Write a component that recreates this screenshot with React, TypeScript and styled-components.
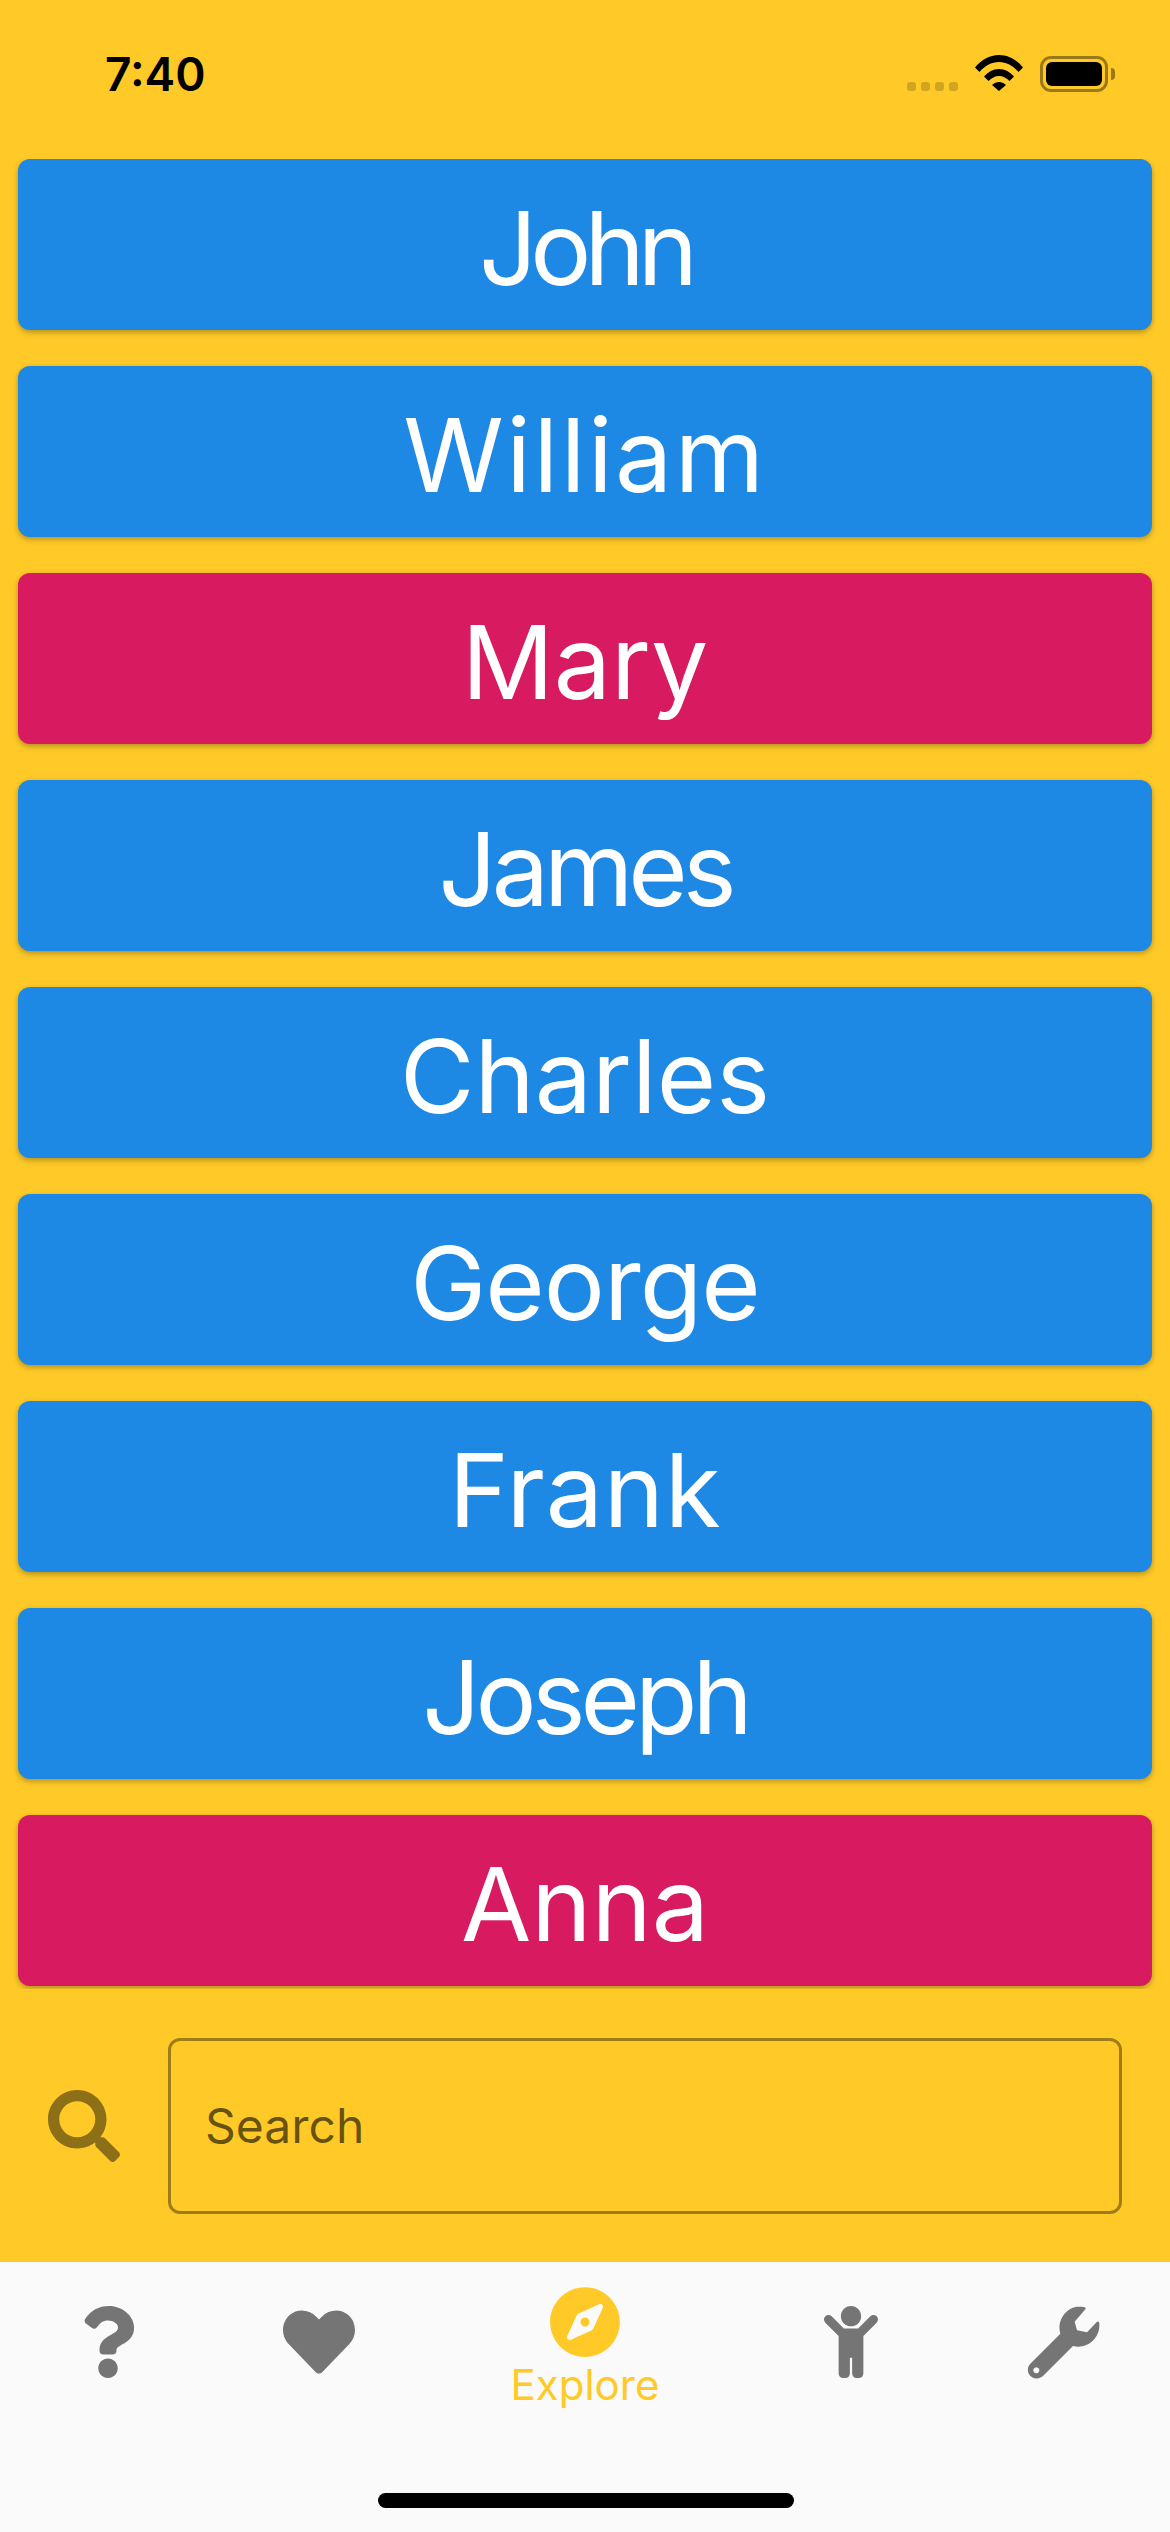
import React from 'react'
import styled, { createGlobalStyle } from 'styled-components'
import { FaSearch, FaQuestion, FaHeart, FaChild, FaCompass } from 'react-icons/fa'

const names: { label: string; pink?: boolean; tracking?: number }[] = [
  { label: 'John', tracking: -7 },
  { label: 'William', tracking: 2.5 },
  { label: 'Mary', pink: true },
  { label: 'James', tracking: -5 },
  { label: 'Charles' },
  { label: 'George', tracking: -1 },
  { label: 'Frank', tracking: 0.7 },
  { label: 'Joseph', tracking: -5 },
  { label: 'Anna', pink: true },
]

function WrenchIcon(): React.ReactElement {
  return (
    <WrenchSvg width="74" height="74" viewBox="112 45 222 222">
      <path
        fillRule="evenodd"
        fill="currentColor"
        d="M287 55L255 92L262 118L292 124L322 92Q330 88 329 105C328 145 290 175 250 165L160 255C145 268 125 262 117 248C112 235 115 225 122 218L212 128C200 90 230 45 270 47C280 47 292 48 287 55ZM140 229a9 9 0 1 0 .01 0Z"
      />
    </WrenchSvg>
  )
}

export default function App(): React.ReactElement {
  return (
    <>
      <GlobalStyle />
      <Page>
        <StatusBar>
          <Clock>7:40</Clock>
          <StatusIcons>
            <Dots>
              <Dot />
              <Dot />
              <Dot />
              <Dot />
            </Dots>
            <svg width="48" height="36" viewBox="0 0 48 36">
              <path d="M0 12.500C6 5 14.500 0 24 0s18 5 24 12.500l-4.500 4.500C38.500 11 31.500 7 24 7S9.500 11 4.500 17z" fill="#000" />
              <path d="M9 21.500C13 17 18 14 24 14s11 3 15 7.500l-4.500 4.500C31.500 23 28 21 24 21s-7.500 2-10.500 5z" fill="#000" />
              <path d="M17 30c2-2 4.500-3 7-3s5 1 7 3l-7 6z" fill="#000" />
            </svg>
            <Battery>
              <BatteryFill />
            </Battery>
          </StatusIcons>
        </StatusBar>
        <List>
          {names.map((n) => (
            <NameCard key={n.label} $pink={n.pink} $tracking={n.tracking ?? 0}>
              {n.label}
            </NameCard>
          ))}
        </List>
        <SearchRow>
          <SearchIcon>
            <FaSearch size={72} />
          </SearchIcon>
          <SearchField>Search</SearchField>
        </SearchRow>
        <TabBar>
          <Tab>
            <FaQuestion size={72} />
          </Tab>
          <Tab>
            <FaHeart size={72} />
          </Tab>
          <ActiveTab>
            <FaCompass size={72} />
            <TabLabel>Explore</TabLabel>
          </ActiveTab>
          <Tab>
            <FaChild size={72} />
          </Tab>
          <Tab>
            <WrenchIcon />
          </Tab>
          <HomeBar />
        </TabBar>
      </Page>
    </>
  )
}

const GlobalStyle = createGlobalStyle`
  html, body {
    margin: 0;
    padding: 0;
    background: #ffca28;
  }
  * {
    box-sizing: border-box;
  }
`

const Page = styled.div`
  display: flex;
  flex-direction: column;
  width: 1170px;
  height: 2532px;
  overflow: hidden;
  background-color: #ffca28;
  font-family: 'Inter', sans-serif;
`

const StatusBar = styled.div`
  display: flex;
  justify-content: space-between;
  align-items: flex-start;
  height: 159px;
  padding: 47px 62px 0 105px;
`

const Clock = styled.div`
  font-size: 46px;
  font-weight: 600;
  line-height: 55px;
  color: #000;
`

const StatusIcons = styled.div`
  display: flex;
  align-items: flex-start;
  padding-top: 8px;
`

const Dots = styled.div`
  display: flex;
  gap: 5px;
  margin: 27px 17px 0 0;
`

const Dot = styled.span`
  width: 9px;
  height: 9px;
  border-radius: 3px;
  background: rgba(0, 0, 0, 0.18);
`

const Battery = styled.div`
  position: relative;
  width: 68px;
  height: 36px;
  margin: 1px 0 0 17px;
  padding: 3px;
  border: 3px solid rgba(0, 0, 0, 0.4);
  border-radius: 11px;

  &::after {
    content: '';
    position: absolute;
    top: 9px;
    right: -10px;
    width: 4px;
    height: 12px;
    border-radius: 0 6px 6px 0;
    background: rgba(0, 0, 0, 0.4);
  }
`

const BatteryFill = styled.div`
  height: 100%;
  border-radius: 6px;
  background: #000;
`

const List = styled.div`
  display: flex;
  flex-direction: column;
  gap: 36px;
  height: 1830px;
  padding: 0 18px;
  overflow: hidden;
`

const NameCard = styled.div<{ $pink?: boolean; $tracking: number }>`
  display: flex;
  flex: none;
  align-items: center;
  justify-content: center;
  height: 171px;
  padding-top: 6px;
  border-radius: 12px;
  background-color: ${(p) => (p.$pink ? '#d81b60' : '#1e88e5')};
  box-shadow: 0 3px 6px rgba(0, 0, 0, 0.2), 0 1px 4px rgba(0, 0, 0, 0.12);
  font-size: 102px;
  letter-spacing: ${(p) => p.$tracking}px;
  color: #fff;
`

const SearchRow = styled.div`
  display: flex;
  align-items: center;
  height: 273px;
  padding: 0 48px;
`

const SearchIcon = styled.div`
  display: flex;
  width: 120px;
  color: rgba(0, 0, 0, 0.45);
`

const SearchField = styled.div`
  display: flex;
  align-items: center;
  width: 954px;
  height: 176px;
  padding: 0 34px;
  border: 3px solid rgba(0, 0, 0, 0.38);
  border-radius: 12px;
  font-size: 48px;
  color: rgba(0, 0, 0, 0.6);
`

const TabBar = styled.div`
  position: relative;
  display: grid;
  flex: 1;
  grid-template-columns: 216px 206px 326px 206px 216px;
  align-items: start;
  background-color: #fafafa;
  color: #757575;
`

const Tab = styled.div`
  display: flex;
  justify-content: center;
  padding-top: 44px;
`

const WrenchSvg = styled.svg`
  margin-left: 4px;
`

const ActiveTab = styled.div`
  display: flex;
  flex-direction: column;
  align-items: center;
  padding-top: 24px;
  color: #ffca28;
`

const TabLabel = styled.div`
  margin-top: 2px;
  font-size: 42px;
  line-height: 50px;
`

const HomeBar = styled.div`
  position: absolute;
  left: 378px;
  top: 231px;
  width: 416px;
  height: 15px;
  border-radius: 8px;
  background: #000;
`
